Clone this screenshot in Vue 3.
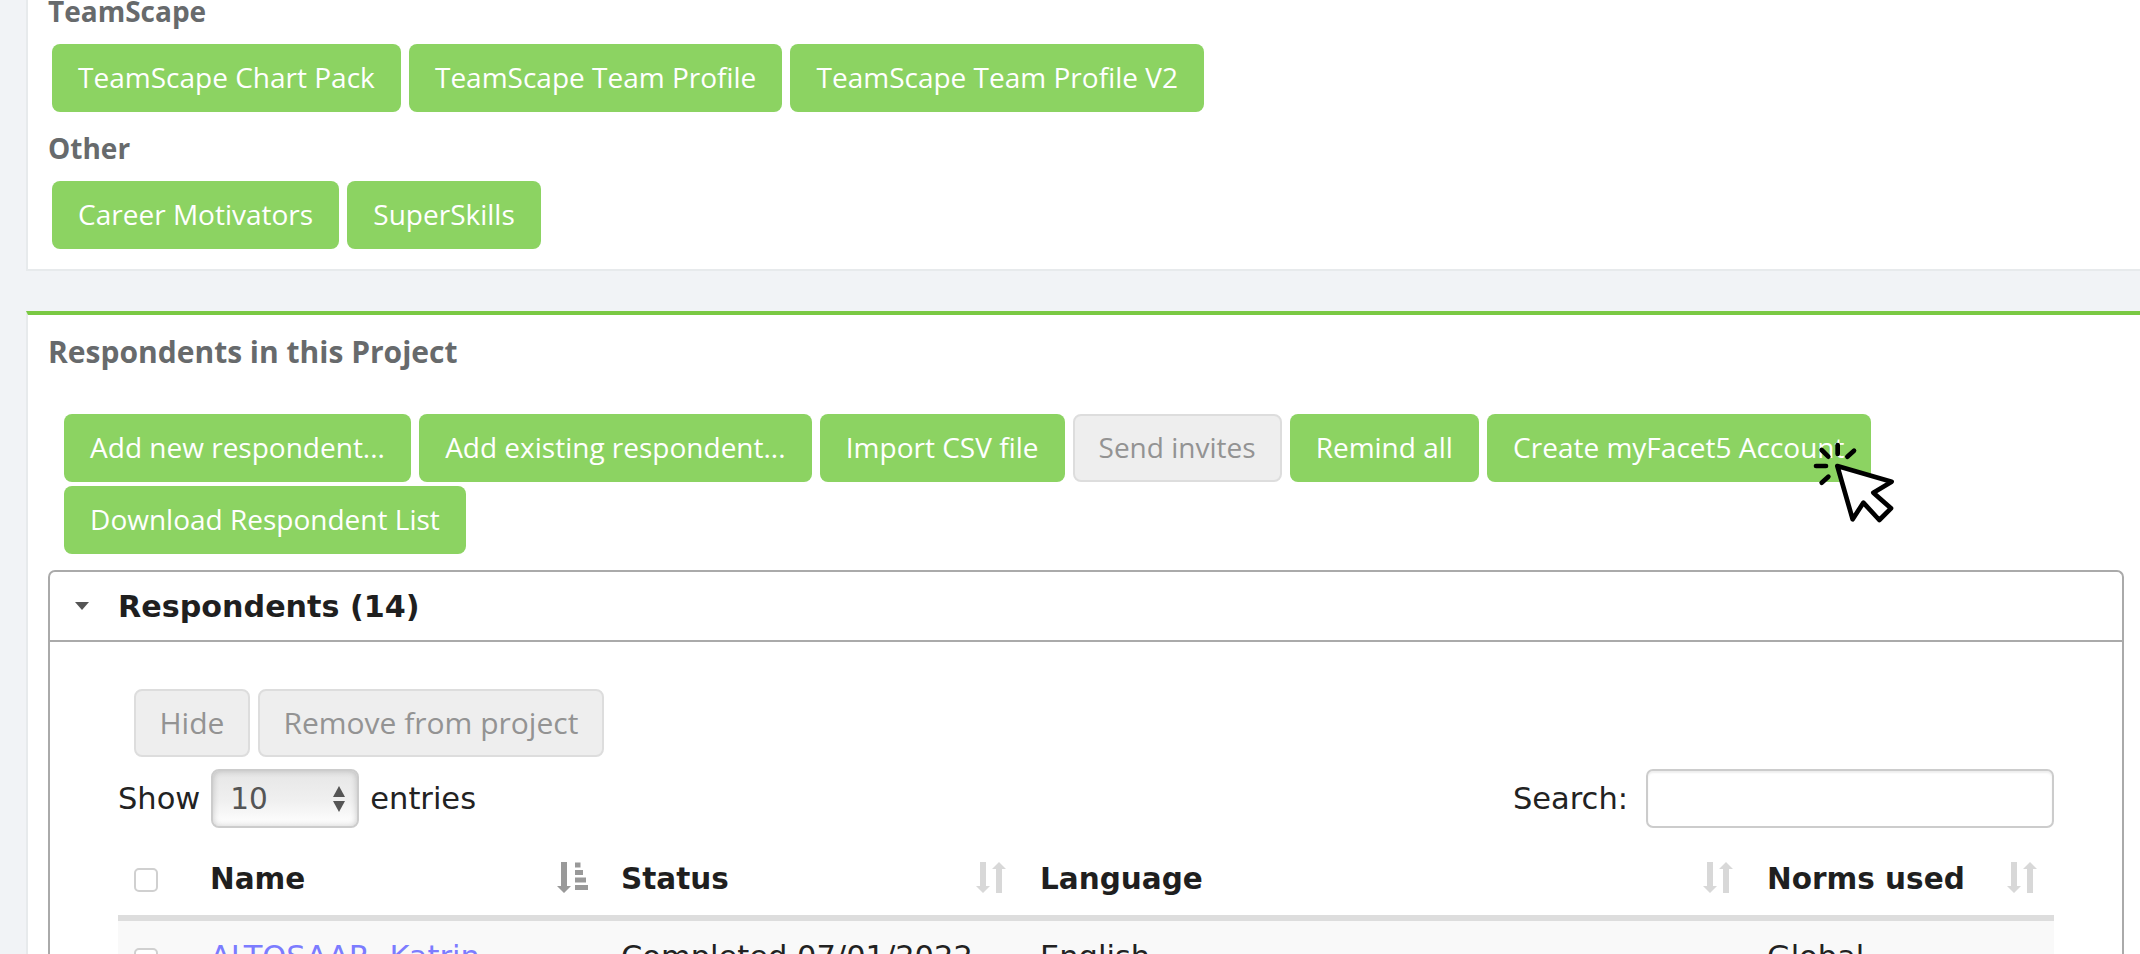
<script setup>
const teamScape = ['TeamScape Chart Pack', 'TeamScape Team Profile', 'TeamScape Team Profile V2']
const other = ['Career Motivators', 'SuperSkills']
const actions = [
  { label: 'Add new respondent...' },
  { label: 'Add existing respondent...' },
  { label: 'Import CSV file' },
  { label: 'Send invites', disabled: true },
  { label: 'Remind all' },
  { label: 'Create myFacet5 Account' },
  { label: 'Download Respondent List' }
]
const columns = [
  { label: 'Name', cls: 'col-name', sorted: true },
  { label: 'Status', cls: 'col-status' },
  { label: 'Language', cls: 'col-language' },
  { label: 'Norms used', cls: 'col-norms' }
]
</script>

<template>
  <div class="page">
    <section class="card first">
      <h3 class="heading">TeamScape</h3>
      <div class="btn-row">
        <button v-for="b in teamScape" :key="b" class="btn">{{ b }}</button>
      </div>
      <h3 class="heading next">Other</h3>
      <div class="btn-row">
        <button v-for="b in other" :key="b" class="btn">{{ b }}</button>
      </div>
    </section>

    <section class="card second">
      <h3 class="heading big">Respondents in this Project</h3>
      <div class="btn-row actions">
        <button v-for="a in actions" :key="a.label" class="btn" :class="{ off: a.disabled }">{{ a.label }}</button>
      </div>

      <div class="accordion">
        <div class="acc-head">
          <span class="acc-arrow"></span>
          <span class="acc-title">Respondents (14)</span>
        </div>
        <div class="acc-body">
          <div class="btn-row tools">
            <button class="btn off">Hide</button>
            <button class="btn off">Remove from project</button>
          </div>
          <div class="controls">
            <div class="length">
              <span>Show</span>
              <div class="select">
                <span>10</span>
                <span class="spin"><i class="up"></i><i class="down"></i></span>
              </div>
              <span>entries</span>
            </div>
            <label class="search">
              <span>Search:</span>
              <input type="text" />
            </label>
          </div>
          <table class="table">
            <colgroup>
              <col class="c0" /><col class="c1" /><col class="c2" /><col class="c3" /><col class="c4" />
            </colgroup>
            <thead>
              <tr>
                <th class="check-cell"><input type="checkbox" class="check" /></th>
                <th v-for="c in columns" :key="c.label">
                  <div class="th-inner" :class="c.cls">
                    <span>{{ c.label }}</span>
                    <svg v-if="c.sorted" class="sort" viewBox="0 0 31 31" fill="#999">
                      <path d="M4 0h6v24h4l-7 7-7-7h4z" />
                      <rect x="18" y="0.5" width="5.5" height="5" />
                      <rect x="18" y="8" width="8" height="5" />
                      <rect x="18" y="15.500" width="11" height="5" />
                      <rect x="18" y="23" width="13" height="5" />
                    </svg>
                    <svg v-else class="sort" viewBox="0 0 31 31" fill="#d8d8d8">
                      <path d="M4 0h6v24h4l-7 7-7-7h4z" />
                      <path d="M20 31h6V7h4l-7-7-7 7h4z" />
                    </svg>
                  </div>
                </th>
              </tr>
            </thead>
            <tbody>
              <tr class="odd">
                <td class="check-cell"><input type="checkbox" class="check" /></td>
                <td><a class="link">ALTOSAAR, Katrin</a></td>
                <td>Completed 07/01/2022</td>
                <td>English</td>
                <td>Global</td>
              </tr>
            </tbody>
          </table>
        </div>
      </div>
    </section>

    <svg class="cursor" viewBox="0 0 450 330" aria-hidden="true">
      <path d="M172 108 335 155 280 188 333 235 298 270 250 218 218 268Z" fill="#fff" stroke="#000" stroke-width="14" stroke-linejoin="round" />
      <g stroke="#000" stroke-width="14" stroke-linecap="round" fill="none">
        <path d="M125 60 145 80" />
        <path d="M173 45V72" />
        <path d="M222 62 202 80" />
        <path d="M108 108H138" />
        <path d="M145 140 125 158" />
      </g>
    </svg>
  </div>
</template>

<style>
html, body { margin: 0; background: #f1f3f6; }
</style>

<style scoped>
.page {
  position: relative;
  width: 2140px;
  height: 954px;
  overflow: hidden;
  background: #f1f3f6;
  padding-left: 26px;
  box-sizing: border-box;
  font-family: "Open Sans", sans-serif;
}
.card {
  background: #fff;
  border-left: 2px solid #e7eaec;
  box-sizing: border-box;
  padding: 0 16px 0 20px;
}
.first {
  margin-top: -7px;
  padding-bottom: 20px;
  border-bottom: 2px solid #e7eaec;
}
.second {
  margin-top: 40px;
  padding-top: 19px;
  border-top: 4px solid #7ac943;
}
.heading {
  margin: 0 0 15px 0;
  font-size: 28px;
  line-height: 36px;
  font-weight: 700;
  color: #676a6c;
}
.heading.next { margin-top: 18px; }
.heading.big { font-size: 30px; }
.btn-row {
  display: flex;
  flex-wrap: wrap;
  gap: 4px 8px;
  margin-left: 4px;
}
.btn {
  height: 68px;
  padding: 0 26.1px 2px;
  box-sizing: border-box;
  border: 0;
  border-radius: 8px;
  background: #8cd362;
  color: #fff;
  font-family: "Open Sans", sans-serif;
  font-size: 28px;
  white-space: nowrap;
}
.btn.off {
  background: #eeeeee;
  border: 2px solid #dddddd;
  color: #939393;
  padding: 0 24px 2px;
}
.actions {
  margin-top: 44px;
  margin-left: 16px;
}
.accordion {
  margin-top: 16px;
  border: 2px solid #aaaaaa;
  border-bottom: 0;
  border-radius: 7px 7px 0 0;
  height: 600px;
}
.acc-head {
  display: flex;
  align-items: center;
  height: 68px;
  border-bottom: 2px solid #aaaaaa;
  padding-left: 25px;
}
.acc-arrow {
  width: 0;
  height: 0;
  border-left: 7px solid transparent;
  border-right: 7px solid transparent;
  border-top: 8px solid #555;
  margin-right: 29px;
}
.acc-title {
  font-family: "DejaVu Sans", sans-serif;
  font-weight: 700;
  font-size: 30.2px;
  color: #1f1f1f;
}
.acc-body {
  padding: 47px 68px 0 68px;
  font-family: "DejaVu Sans", sans-serif;
  font-size: 29.5px;
  color: #222;
}
.tools { margin-left: 16px; }
.tools .btn {
  font-size: 30px;
  padding: 0 23.5px 2px;
}
.controls {
  display: flex;
  justify-content: space-between;
  align-items: center;
  margin-top: 12px;
  height: 59px;
  font-size: 30.5px;
}
.length, .search {
  display: flex;
  align-items: center;
}
.length { gap: 11px; }
.search { gap: 18px; }
.select {
  position: relative;
  display: flex;
  align-items: center;
  justify-content: space-between;
  width: 148px;
  height: 59px;
  box-sizing: border-box;
  padding: 0 12px 0 17px;
  border: 2px solid #cccccc;
  border-radius: 8px;
  background: linear-gradient(#e6e6e6, #f0f0f0 55%, #ffffff);
  box-shadow: inset 0 0 6px rgba(0, 0, 0, 0.2);
  color: #555;
  font-size: 29.5px;
}
.spin {
  display: flex;
  flex-direction: column;
  gap: 4px;
}
.spin i {
  width: 0;
  height: 0;
  border-left: 6.5px solid transparent;
  border-right: 6.5px solid transparent;
}
.spin .up { border-bottom: 11px solid #555; }
.spin .down { border-top: 11px solid #555; }
.search input {
  width: 408px;
  height: 59px;
  box-sizing: border-box;
  border: 2px solid #cccccc;
  border-radius: 7px;
  background: #fff;
  box-shadow: inset 0 2px 2px rgba(0, 0, 0, 0.07);
  outline: none;
}
.table {
  width: 1936px;
  table-layout: fixed;
  border-collapse: separate;
  border-spacing: 0;
}
.c0 { width: 76px; }
.c1 { width: 411px; }
.c2 { width: 419px; }
.c3 { width: 727px; }
.c4 { width: 303px; }
th {
  box-sizing: border-box;
  height: 93px;
  padding: 0 0 0 16px;
  text-align: left;
  vertical-align: top;
  border-bottom: 6px solid #dddddd;
  font-weight: 700;
  color: #1f1f1f;
}
.th-inner {
  display: flex;
  align-items: center;
  justify-content: space-between;
  height: 38px;
  margin-top: 30px;
  padding-right: 17px;
}
.th-inner span { margin-top: 4px; }
.col-norms { padding-right: 16px; }
.sort {
  flex: none;
  width: 31px;
  height: 31px;
}
.check {
  appearance: none;
  display: block;
  width: 24px;
  height: 24px;
  margin: 0;
  box-sizing: border-box;
  border: 2px solid #d0d0d0;
  border-radius: 5px;
  background: #fff;
}
th.check-cell { padding-top: 40px; }
.odd td {
  background: #f9f9f9;
  padding: 16px 0 10px 16px;
  line-height: 40px;
  font-size: 30.5px;
  vertical-align: top;
  white-space: nowrap;
}
.odd td.check-cell { padding-top: 27px; }
.link { color: #7c7cff; }
.cursor {
  position: absolute;
  left: 1780px;
  top: 430px;
  width: 150px;
  height: 110px;
}
</style>
